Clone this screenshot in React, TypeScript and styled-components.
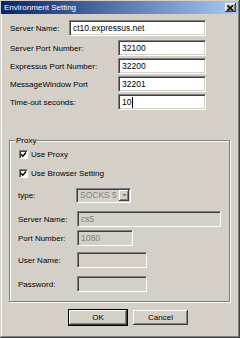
import styled, { createGlobalStyle } from "styled-components";

// Page reset and dialog font
const GlobalStyle = createGlobalStyle`
  html, body {
    margin: 0;
    padding: 0;
    background: #d4d0c8;
  }
  body {
    font-family: "Liberation Sans", Arial, sans-serif;
    font-size: 8px;
    color: #000;
  }
`;

// Top form rows: label, input left offset, width, value
const serverRows = [
  { label: "Server Name:", left: 69, width: 137, value: "ct10.expressus.net" },
  { label: "Server Port Number:", left: 118, width: 88, value: "32100" },
  { label: "Expressus Port Number:", left: 118, width: 88, value: "32200" },
  { label: "MessageWindow Port", left: 118, width: 88, value: "32201" },
  { label: "Time-out seconds:", left: 118, width: 88, value: "10", focused: true },
];

export default function App() {
  return (
    <>
      <GlobalStyle />
      <Window>
        <TitleBar>
          <TitleText>Environment Setting</TitleText>
          <CloseButton>
            <svg width="7" height="6" viewBox="0 0 7 6">
              <path d="M0.5 0.5 L6 5.5 M6 0.5 L0.5 5.5" stroke="#000" strokeWidth="1.6" />
            </svg>
          </CloseButton>
        </TitleBar>

        <Body>
          <ServerForm>
            {serverRows.map((row, i) => (
              <FormRow key={i} $first={i === 0}>
                <Label $width={row.left - 10}>{row.label}</Label>
                <Field $width={row.width}>
                  {row.value}
                  {row.focused && <Caret />}
                </Field>
              </FormRow>
            ))}
          </ServerForm>

          <GroupBox>
            <Legend>Proxy</Legend>
            <CheckRow $top={0}>
              <CheckBox>
                <CheckMark />
              </CheckBox>
              Use Proxy
            </CheckRow>
            <CheckRow $top={10}>
              <CheckBox>
                <CheckMark />
              </CheckBox>
              Use Browser Setting
            </CheckRow>

            <ProxyRow $top={10} $height={14}>
              <ProxyLabel>type:</ProxyLabel>
              <Select>
                <SelectText>SOCKS 5</SelectText>
                <DropButton>
                  <svg width="7" height="5" viewBox="0 0 7 5">
                    <path d="M1 1 L6 1 L3.5 3.5 Z" fill="#808080" />
                  </svg>
                </DropButton>
              </Select>
            </ProxyRow>
            <ProxyRow $top={9}>
              <ProxyLabel>Server Name:</ProxyLabel>
              <Field $width={144} $disabled>cs5</Field>
            </ProxyRow>
            <ProxyRow $top={3}>
              <ProxyLabel>Port Number:</ProxyLabel>
              <Field $width={56} $disabled>1080</Field>
            </ProxyRow>
            <ProxyRow $top={6}>
              <ProxyLabel>User Name:</ProxyLabel>
              <Field $width={70} $disabled />
            </ProxyRow>
            <ProxyRow $top={8}>
              <ProxyLabel>Password:</ProxyLabel>
              <Field $width={70} $disabled />
            </ProxyRow>
          </GroupBox>

          <ButtonRow>
            <Button $default $width={60}>OK</Button>
            <Button $width={57}>Cancel</Button>
          </ButtonRow>
        </Body>
      </Window>
    </>
  );
}

// Outer dialog frame with raised 3D edge
const Window = styled.div`
  width: 240px;
  height: 338px;
  box-sizing: border-box;
  background: #d4d0c8;
  box-shadow: inset -1px -1px #404040, inset 1px 1px #d4d0c8,
    inset -2px -2px #808080, inset 2px 2px #fff;
  display: flex;
  flex-direction: column;
  overflow: hidden;
`;

// Blue caption bar
const TitleBar = styled.div`
  margin: 1px 2px 0 1px;
  height: 13px;
  background: linear-gradient(to right, #0a246a, #a6caf0);
  display: flex;
  align-items: center;
  justify-content: space-between;
  padding: 0 2px 0 3px;
`;

const TitleText = styled.span`
  color: #fff;
  font-size: 8px;
  line-height: 13px;
  white-space: nowrap;
`;

// Caption close button
const CloseButton = styled.div`
  width: 11px;
  height: 9px;
  box-sizing: border-box;
  background: #d4d0c8;
  box-shadow: inset -1px -1px #404040, inset 1px 1px #fff, inset -2px -2px #808080;
  display: flex;
  align-items: center;
  justify-content: center;
`;

const Body = styled.div`
  display: flex;
  flex-direction: column;
  padding: 6px 0 0 0;
`;

// Server settings block
const ServerForm = styled.div`
  display: flex;
  flex-direction: column;
  gap: 2px;
  padding-left: 10px;
`;

const FormRow = styled.div<{ $first?: boolean }>`
  display: flex;
  align-items: center;
  margin-bottom: ${(p) => (p.$first ? "2px" : "0")};
`;

const Label = styled.span<{ $width: number }>`
  width: ${(p) => p.$width}px;
  flex: none;
  white-space: nowrap;
`;

// Sunken edit box
const Field = styled.div<{ $width: number; $disabled?: boolean }>`
  width: ${(p) => p.$width}px;
  height: 16px;
  box-sizing: border-box;
  flex: none;
  border: 1px solid;
  border-color: #808080 #fff #fff #808080;
  box-shadow: inset 1px 1px #404040, inset -1px -1px #d4d0c8;
  background: ${(p) => (p.$disabled ? "#d4d0c8" : "#fff")};
  color: ${(p) => (p.$disabled ? "#808080" : "#000")};
  font-size: 8.5px;
  line-height: 14px;
  padding: 0 3px;
  display: flex;
  align-items: center;
  white-space: nowrap;
`;

const Caret = styled.span`
  width: 1px;
  height: 11px;
  background: #000;
  margin-left: 1px;
`;

// Etched group frame
const GroupBox = styled.div`
  position: relative;
  margin: 30px 0 0 9px;
  width: 221px;
  box-sizing: border-box;
  border: 1px solid #808080;
  box-shadow: inset 1px 1px #fff, 1px 1px #fff;
  padding: 9px 0 9px 8px;
  display: flex;
  flex-direction: column;
`;

// Group caption sitting over the frame line
const Legend = styled.span`
  position: absolute;
  top: -6px;
  left: 5px;
  padding: 0 1px;
  background: #d4d0c8;
  line-height: 11px;
`;

const CheckRow = styled.div<{ $top: number }>`
  display: flex;
  align-items: center;
  height: 9px;
  margin-top: ${(p) => p.$top}px;
  margin-left: 1px;
  gap: 3px;
  white-space: nowrap;
`;

const CheckBox = styled.span`
  width: 9px;
  height: 9px;
  box-sizing: border-box;
  background: #fff;
  border: 1px solid;
  border-color: #808080 #fff #fff #808080;
  box-shadow: inset 1px 1px #404040;
  display: flex;
  align-items: center;
  justify-content: center;
`;

function CheckMark() {
  return (
    <svg width="7" height="7" viewBox="0 0 7 7">
      <path d="M1 3.2 L2.8 5.2 L6 1.4" stroke="#000" strokeWidth="1.5" fill="none" />
    </svg>
  );
}

const ProxyRow = styled.div<{ $top: number; $height?: number }>`
  display: flex;
  align-items: center;
  height: ${(p) => p.$height ?? 16}px;
  margin-top: ${(p) => p.$top}px;
`;

const ProxyLabel = styled.span`
  width: 59px;
  flex: none;
  white-space: nowrap;
`;

// Disabled drop-down list
const Select = styled.div`
  width: 55px;
  height: 15px;
  box-sizing: border-box;
  margin-left: -1px;
  border: 1px solid;
  border-color: #808080 #fff #fff #808080;
  box-shadow: inset 1px 1px #404040, inset -1px -1px #d4d0c8;
  display: flex;
  align-items: stretch;
  padding: 1px;
`;

const SelectText = styled.span`
  flex: 1;
  color: #808080;
  font-size: 8.5px;
  line-height: 11px;
  padding-left: 2px;
`;

const DropButton = styled.span`
  width: 10px;
  box-sizing: border-box;
  background: #d4d0c8;
  box-shadow: inset -1px -1px #404040, inset 1px 1px #fff, inset -2px -2px #808080;
  display: flex;
  align-items: center;
  justify-content: center;
`;

const ButtonRow = styled.div`
  display: flex;
  gap: 4px;
  margin-top: 7px;
  padding-left: 68px;
`;

// Raised push button; default one gets the black frame
const Button = styled.div<{ $default?: boolean; $width: number }>`
  width: ${(p) => p.$width}px;
  height: 17px;
  box-sizing: border-box;
  background: #d4d0c8;
  border: 1px solid ${(p) => (p.$default ? "#000" : "transparent")};
  box-shadow: inset -1px -1px #404040, inset 1px 1px #fff, inset -2px -2px #808080;
  display: flex;
  align-items: center;
  justify-content: center;
  font-size: 8px;
`;
